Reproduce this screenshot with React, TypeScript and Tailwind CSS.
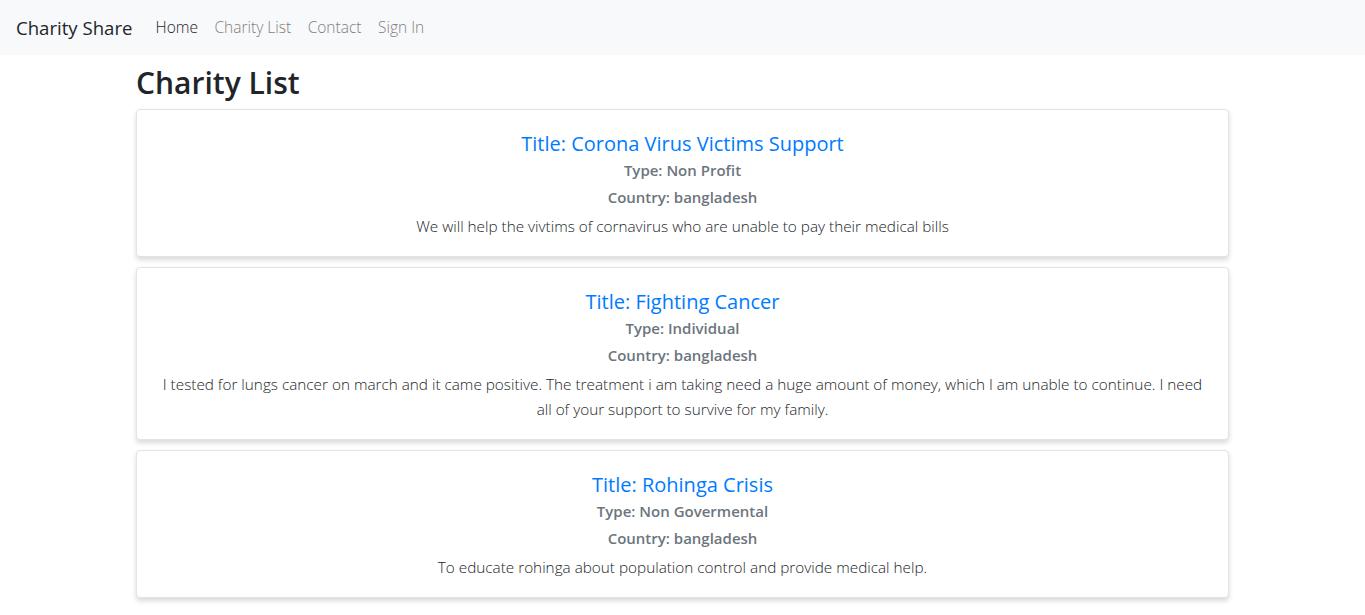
import React from "react";

const items = [
  {
    title: "Corona Virus Victims Support",
    type: "Non Profit",
    country: "bangladesh",
    desc: "We will help the vivtims of cornavirus who are unable to pay their medical bills",
  },
  {
    title: "Fighting Cancer",
    type: "Individual",
    country: "bangladesh",
    desc: "I tested for lungs cancer on march and it came positive. The treatment i am taking need a huge amount of money, which I am unable to continue. I need all of your support to survive for my family.",
  },
  {
    title: "Rohinga Crisis",
    type: "Non Govermental",
    country: "bangladesh",
    desc: "To educate rohinga about population control and provide medical help.",
  },
];

export default function App() {
  return (
    <div className="min-h-screen bg-white text-[#212529]" style={{ fontFamily: '"Open Sans", "Noto Sans", sans-serif' }}>
      <nav className="h-[55px] bg-[#f8f9fa] flex items-center px-4">
        <span className="text-[18.6px] text-[#212529] mr-[23px]">Charity Share</span>
        <div className="flex items-center gap-[16.5px] text-[15.5px] font-light">
          <span className="text-[#212529]">Home</span>
          <span className="text-[#7f7f7f]">Charity List</span>
          <span className="text-[#7f7f7f]">Contact</span>
          <span className="text-[#7f7f7f]">Sign In</span>
        </div>
      </nav>
      <main className="w-[1093px] mx-auto">
        <h2 className="text-[30px] font-semibold leading-[38px] mt-[9px] mb-[7px]">Charity List</h2>
        <div className="flex flex-col gap-[10px]">
          {items.map((it) => (
            <div key={it.title} className="border border-[#e3e3e3] rounded-[4px] bg-white shadow-[0_3px_5px_rgba(0,0,0,0.15)] px-5 pt-[22px] pb-[17px] text-center">
              <h5 className="text-[20px] leading-[24px] text-[#007bff] mb-[2px]">Title: {it.title}</h5>
              <h6 className="text-[15px] leading-[24px] font-semibold text-[#6c757d] mb-[3px]">Type: {it.type}</h6>
              <h6 className="text-[15px] leading-[24px] font-semibold text-[#6c757d] mb-[5px]">Country: {it.country}</h6>
              <p className="text-[15.3px] leading-[25px] font-light text-[#212529]">{it.desc}</p>
            </div>
          ))}
        </div>
      </main>
    </div>
  );
}
